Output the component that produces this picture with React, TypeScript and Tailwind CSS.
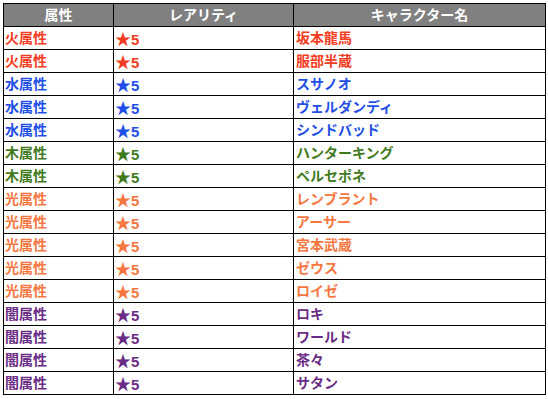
const rows: [string, string, string][] = [
  ["火", "坂本龍馬", "text-[#f33d22]"],
  ["火", "服部半蔵", "text-[#f33d22]"],
  ["水", "スサノオ", "text-[#1f4fe6]"],
  ["水", "ヴェルダンディ", "text-[#1f4fe6]"],
  ["水", "シンドバッド", "text-[#1f4fe6]"],
  ["木", "ハンターキング", "text-[#3f7a1c]"],
  ["木", "ペルセポネ", "text-[#3f7a1c]"],
  ["光", "レンブラント", "text-[#f5773f]"],
  ["光", "アーサー", "text-[#f5773f]"],
  ["光", "宮本武蔵", "text-[#f5773f]"],
  ["光", "ゼウス", "text-[#f5773f]"],
  ["光", "ロイゼ", "text-[#f5773f]"],
  ["闇", "ロキ", "text-[#6a2c84]"],
  ["闇", "ワールド", "text-[#6a2c84]"],
  ["闇", "茶々", "text-[#6a2c84]"],
  ["闇", "サタン", "text-[#6a2c84]"],
];

export default function App() {
  return (
    <div className="w-[548px] h-[399px] bg-white p-[3px] font-['Liberation_Sans','Noto_Sans_CJK_JP',sans-serif]">
      <table className="w-[543px] border-collapse table-fixed text-[14px] font-bold">
        <colgroup>
          <col className="w-[110px]" />
          <col className="w-[180px]" />
          <col />
        </colgroup>
        <thead>
          <tr className="h-[23px] bg-[#808080] text-white">
            <th className="border border-black font-bold leading-none">属性</th>
            <th className="border border-black font-bold leading-none">レアリティ</th>
            <th className="border border-black font-bold leading-none">キャラクター名</th>
          </tr>
        </thead>
        <tbody>
          {rows.map(([el, name, color], i) => (
            <tr key={i} className={`h-[23px] ${color}`}>
              <td className="border border-black px-[1px] leading-none">{el}属性</td>
              <td className="border border-black px-[1px] leading-none text-[15px]">
                <span className="font-['Noto_Sans_CJK_JP',sans-serif] text-[16px]">★</span>5
              </td>
              <td className="border border-black px-[2px] leading-none">{name}</td>
            </tr>
          ))}
        </tbody>
      </table>
    </div>
  );
}
